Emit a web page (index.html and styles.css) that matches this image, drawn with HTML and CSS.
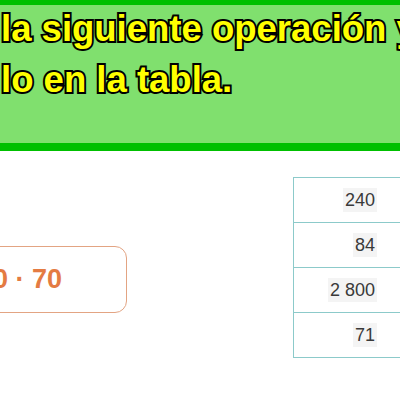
FILE: index.html
```html
<!DOCTYPE html>
<html lang="es">
<head>
<meta charset="utf-8">
<title>Operación</title>
<link rel="stylesheet" href="styles.css">
</head>
<body>
<header class="banner">
  <p class="title">la siguiente operación y<br>lo en la tabla.</p>
</header>
<main class="work">
  <div class="expr">0 · 70</div>
  <table class="answers">
    <tr><td><span class="num">240</span></td></tr>
    <tr><td><span class="num">84</span></td></tr>
    <tr><td><span class="num">2 800</span></td></tr>
    <tr><td><span class="num">71</span></td></tr>
  </table>
</main>
</body>
</html>
```

FILE: styles.css
```css
html, body {
  margin: 0;
  padding: 0;
  background: #ffffff;
  overflow: hidden;
  width: 400px;
  height: 400px;
}

.banner {
  box-sizing: border-box;
  height: 151px;
  background: #80e06e;
  border-top: 5px solid #00c000;
  border-bottom: 8px solid #00c000;
  overflow: hidden;
}

.title {
  margin: -2px 0 0 0;
  padding: 0 0 0 1px;
  white-space: nowrap;
  font-family: "Liberation Sans", Arial, sans-serif;
  font-weight: bold;
  font-size: 36.5px;
  line-height: 51px;
  color: #ffff00;
  -webkit-text-stroke: 4px #000000;
  paint-order: stroke fill;
}

.work {
  display: flex;
  align-items: flex-start;
  gap: 166px;
}

.expr {
  box-sizing: border-box;
  flex: none;
  margin-top: 95px;
  margin-left: -40px;
  width: 167px;
  height: 67px;
  padding-left: 32px;
  display: flex;
  align-items: center;
  border: 1.5px solid #e3a483;
  border-radius: 12px;
  font-family: "Liberation Sans", Arial, sans-serif;
  font-weight: bold;
  font-size: 27px;
  color: #e47b42;
  white-space: nowrap;
}

.answers {
  flex: none;
  margin-top: 26px;
  width: 125px;
  border-collapse: collapse;
  font-family: "Liberation Sans", Arial, sans-serif;
  font-size: 18px;
  color: #3a3a3a;
}

.answers td {
  height: 44px;
  padding: 0 40px 0 0;
  text-align: right;
  border: 1.5px solid #8ccaca;
}

.num {
  background: #f4f4f4;
  padding: 2px 2px;
}
```
